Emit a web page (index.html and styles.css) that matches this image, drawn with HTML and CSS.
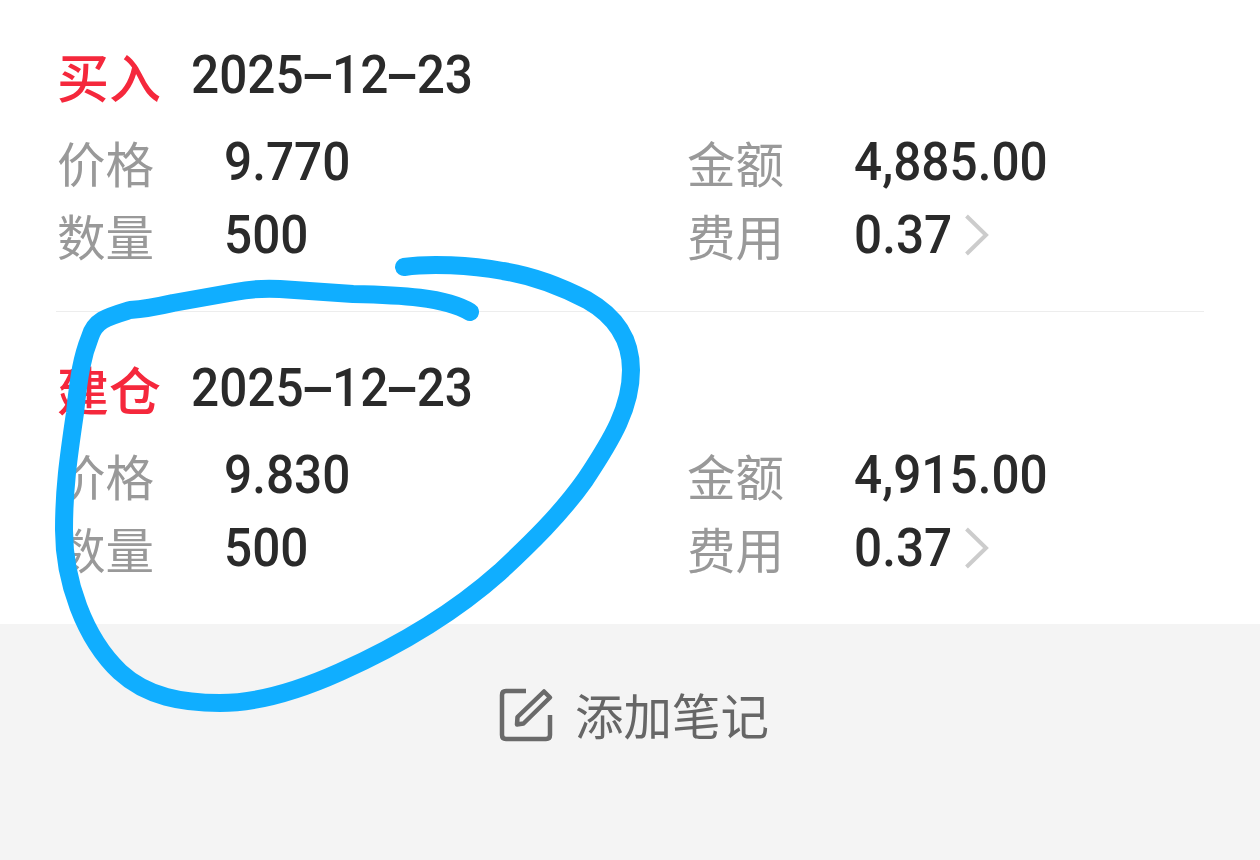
FILE: index.html
```html
<!DOCTYPE html>
<html lang="zh-CN">
<head>
  <meta charset="UTF-8">
  <title>交易记录</title>
  <link rel="stylesheet" href="styles.css">
</head>
<body>
  <div class="record-list">
    <div class="record">
      <div class="record-head">
        <span class="type">买入</span>
        <span class="num">2025<span class="dash">-</span>12<span class="dash">-</span>23</span>
      </div>
      <div class="record-grid">
        <div class="cell"><span class="label">价格</span><span class="num">9.770</span></div>
        <div class="cell"><span class="label">金额</span><span class="num">4,885.00</span></div>
        <div class="cell"><span class="label">数量</span><span class="num">500</span></div>
        <div class="cell"><span class="label">费用</span><span class="num fee">0.37</span>
          <svg class="arrow" width="26" height="44" viewBox="0 0 26 44"><path d="M2.5 3 L22 22 L2.5 41"/></svg>
        </div>
      </div>
    </div>
    <div class="record">
      <div class="record-head">
        <span class="type">建仓</span>
        <span class="num">2025<span class="dash">-</span>12<span class="dash">-</span>23</span>
      </div>
      <div class="record-grid">
        <div class="cell"><span class="label">价格</span><span class="num">9.830</span></div>
        <div class="cell"><span class="label">金额</span><span class="num">4,915.00</span></div>
        <div class="cell"><span class="label">数量</span><span class="num">500</span></div>
        <div class="cell"><span class="label">费用</span><span class="num fee">0.37</span>
          <svg class="arrow" width="26" height="44" viewBox="0 0 26 44"><path d="M2.5 3 L22 22 L2.5 41"/></svg>
        </div>
      </div>
    </div>
  </div>
  <div class="add-note">
    <svg class="note-icon" width="56" height="56" viewBox="0 0 56 56">
      <path d="M28 4 H8 Q4 4 4 8 V48 Q4 52 8 52 H48 Q52 52 52 48 V28"/>
      <path d="M19 37.5 L19.5 30 L46 4.5 L52 10.5 L25.5 36.5 Z"/>
    </svg>
    <span class="note-text">添加笔记</span>
  </div>
  <!-- hand-drawn circle over the second record -->
  <svg class="marker" width="1260" height="860" viewBox="0 0 1260 860">
    <path d="M404 267 C430 263 470 265 503 271 C535 276 562 287 587 300 C617 317 631 340 631 370 C631 407 613 438 585 480 C561 514 530 544 500 572 C455 612 405 643 340 672 C300 690 260 703 220 703 C183 703 147 697 120 672 C84 638 64 580 64 530 C64 490 68 460 75 413 C79 375 82 357 90 337 C95 320 107 317 130 310 C145 309 160 306 173 303 L235 292 C250 289 262 288 280 289 L353 294 C400 295 445 297 470 312"/>
  </svg>
</body>
</html>
```
FILE: styles.css
```css
* { box-sizing: border-box; }
body { margin: 0; width: 1260px; height: 860px; overflow: hidden; position: relative; background: #f4f4f4; font-family: "Noto Sans CJK SC", sans-serif; display: flex; flex-direction: column; }
.record-list { background: #fff; padding: 0 56px; height: 624px; }
.record { height: 312px; padding-top: 38px; }
.record:first-child { border-bottom: 1px solid #ededed; }
.record:last-child { padding-top: 39px; }
.record-head { display: flex; align-items: center; height: 74px; }
.type { width: 135px; padding: 2px 0 0 1px; font-size: 52px; line-height: 74px; font-weight: 500; color: #f5283c; }
.record-grid { display: grid; grid-template-columns: 630px 1fr; grid-auto-rows: 73px; padding-top: 13px; }
.cell { display: flex; align-items: center; }
.label { width: 168px; padding: 2px 0 0 1px; font-size: 48.5px; line-height: 73px; color: #999; }
.num { font-family: Roboto, "Noto Sans CJK SC", sans-serif; font-size: 54px; line-height: 70px; font-weight: 500; color: #2a2a2a; white-space: nowrap; transform: scaleX(0.917); transform-origin: left center; }
.dash { display: inline-block; width: 31px; text-align: center; transform: scaleX(2.05); }
.fee { width: 110px; }
.arrow { fill: none; stroke: #ccc; stroke-width: 4; }

/* bottom bar */
.add-note { display: flex; justify-content: center; align-items: center; height: 182px; gap: 21px; padding-left: 7px; }
.note-icon { fill: none; stroke: #6a6a6a; stroke-width: 4.5; stroke-linejoin: round; }
.note-text { padding-bottom: 3px; font-size: 48.5px; line-height: 70px; color: #666; }

.marker { position: absolute; left: 0; top: 0; fill: none; stroke: #10aeff; stroke-width: 18; stroke-linecap: round; stroke-linejoin: round; pointer-events: none; }
```
